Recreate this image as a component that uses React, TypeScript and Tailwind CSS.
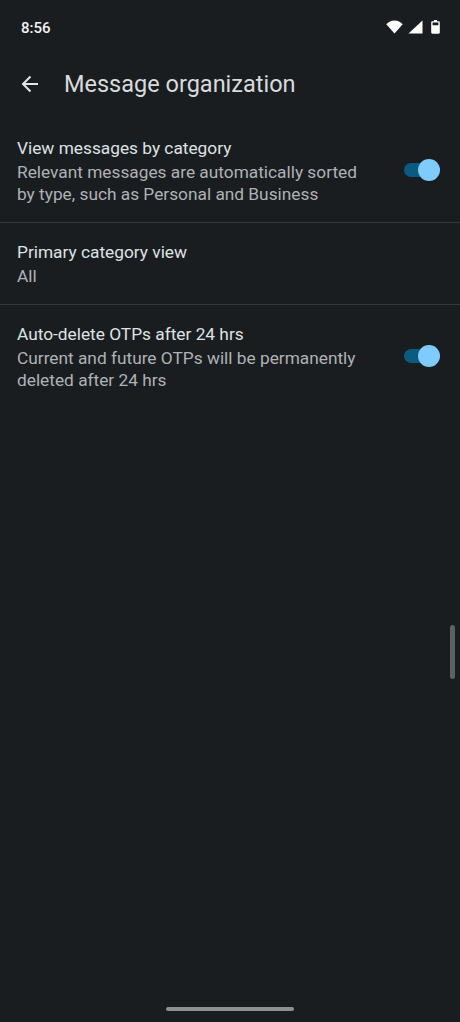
import React from "react";

function Toggle() {
  return (
    <div className="relative w-[36px] h-[22px] shrink-0 flex items-center mb-[3px]">
      <div className="w-[30px] h-[14px] rounded-full bg-[#0b5a80]" />
      <div className="absolute right-0 top-0 w-[22px] h-[22px] rounded-full bg-[#7fcbfb]" />
    </div>
  );
}

function Row({ title, sub, toggle }: { title: string; sub: React.ReactNode; toggle?: boolean }) {
  return (
    <div className="flex items-center justify-between pl-[17px] pr-[20px]">
      <div>
        <div className="text-[17.3px] leading-[22px] text-[#dfe2e4]">{title}</div>
        <div className="mt-[2px] text-[17.3px] leading-[22px] text-[#aeb2b5]">{sub}</div>
      </div>
      {toggle && <Toggle />}
    </div>
  );
}

export default function App() {
  return (
    <div className="relative w-[460px] h-[1022px] overflow-hidden bg-[#1a1d20] font-['Roboto',sans-serif]">
      {/* status bar */}
      <div className="flex items-center justify-between h-[54px] pl-[21px] pr-[20px]">
        <span className="pt-[2px] text-[15px] font-medium text-[#f1f2f3]">8:56</span>
        <div className="flex items-center gap-[5px]">
          <svg width="17" height="14" viewBox="0 0 17 14" fill="#ffffff">
            <path d="M8.5 13.5 0.3 4.3C2.4 2 5.3 0.6 8.5 0.6s6.1 1.4 8.2 3.7z" />
          </svg>
          <svg width="15" height="14" viewBox="0 0 15 14" fill="#ffffff">
            <path d="M14.5 0.5v13H0.5z" />
          </svg>
          <svg width="9" height="14" viewBox="0 0 9 14" className="ml-[3px]" fill="#ffffff">
            <path d="M3 0h3v1.2h1.6c.7 0 1.2.5 1.2 1.2v10.2c0 .7-.5 1.2-1.2 1.2H1.4C.7 13.800.2 13.300.2 12.600V2.400c0-.7.5-1.200 1.200-1.200H3zM1.600 2.600v2.600h5.800V2.600z" />
          </svg>
        </div>
      </div>

      {/* toolbar */}
      <div className="flex items-center h-[60px] pl-[21px]">
        <svg width="18" height="18" viewBox="0 0 18 18" fill="none" stroke="#e3e5e6" strokeWidth="2">
          <path d="M17 9H2M9.500 1.500 2 9l7.500 7.500" />
        </svg>
        <h1 className="ml-[25px] pt-[1px] text-[23.5px] font-normal text-[#d8dbdd]">Message organization</h1>
      </div>

      {/* settings list */}
      <div className="pt-[23px]">
        <Row
          toggle
          title="View messages by category"
          sub={<>Relevant messages are automatically sorted<br />by type, such as Personal and Business</>}
        />
        <div className="h-px bg-[#33373a] mt-[17px]" />
        <div className="pt-[18px] pb-[17px]">
          <Row title="Primary category view" sub="All" />
        </div>
        <div className="h-px bg-[#33373a]" />
        <div className="pt-[18px]">
          <Row
            toggle
            title="Auto-delete OTPs after 24 hrs"
            sub={<>Current and future OTPs will be permanently<br />deleted after 24 hrs</>}
          />
        </div>
      </div>

      {/* scrollbar + gesture pill */}
      <div className="absolute left-[450px] top-[625px] w-[5px] h-[54px] rounded-full bg-[#5d6163]" />
      <div className="absolute left-[166px] top-[1007px] w-[128px] h-[4px] rounded-full bg-[#8c9092]" />
    </div>
  );
}
